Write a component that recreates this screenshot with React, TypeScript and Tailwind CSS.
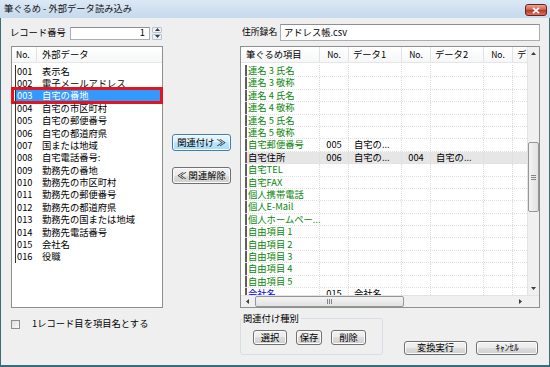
import React from 'react';

const leftItems: [string, string][] = [
  ['001', '表示名'],
  ['002', '電子メールアドレス'],
  ['003', '自宅の番地'],
  ['004', '自宅の市区町村'],
  ['005', '自宅の郵便番号'],
  ['006', '自宅の都道府県'],
  ['007', '国または地域'],
  ['008', '自宅電話番号:'],
  ['009', '勤務先の番地'],
  ['010', '勤務先の市区町村'],
  ['011', '勤務先の郵便番号'],
  ['012', '勤務先の都道府県'],
  ['013', '勤務先の国または地域'],
  ['014', '勤務先電話番号'],
  ['015', '会社名'],
  ['016', '役職'],
];

type GridRow = {
  name: string;
  tone?: 'green' | 'black' | 'blue';
  n1?: string;
  d1?: string;
  n2?: string;
  d2?: string;
  selected?: boolean;
};

const gridRows: GridRow[] = [
  { name: '連名 3 氏名' },
  { name: '連名 3 敬称' },
  { name: '連名 4 氏名' },
  { name: '連名 4 敬称' },
  { name: '連名 5 氏名' },
  { name: '連名 5 敬称' },
  { name: '自宅郵便番号', n1: '005', d1: '自宅の...' },
  { name: '自宅住所', tone: 'black', n1: '006', d1: '自宅の...', n2: '004', d2: '自宅の...', selected: true },
  { name: '自宅TEL' },
  { name: '自宅FAX' },
  { name: '個人携帯電話' },
  { name: '個人E-Mail' },
  { name: '個人ホームペー...' },
  { name: '自由項目 1' },
  { name: '自由項目 2' },
  { name: '自由項目 3' },
  { name: '自由項目 4' },
  { name: '自由項目 5' },
  { name: '会社名', tone: 'blue', n1: '015', d1: '会社名' },
];

const toneClass = {
  green: 'text-[#0b860b]',
  black: 'text-black',
  blue: 'text-[#0000ee]',
};

function Tri({ dir }: { dir: 'up' | 'down' | 'left' | 'right' }) {
  if (dir === 'up' || dir === 'down') {
    return (
      <svg viewBox="0 0 5 3" className="w-[5px] h-[3px]">
        <polygon points={dir === 'up' ? '0,3 2.5,0 5,3' : '0,0 2.5,3 5,0'} fill="#3c3c3c" />
      </svg>
    );
  }
  return (
    <svg viewBox="0 0 3 5" className="w-[3px] h-[5px]">
      <polygon points={dir === 'left' ? '3,0 0,2.5 3,5' : '0,0 3,2.5 0,5'} fill="#3c3c3c" />
    </svg>
  );
}

function Btn({ children, hot, className }: { children: React.ReactNode; hot?: boolean; className: string }) {
  return (
    <button
      className={
        'flex items-center justify-center whitespace-nowrap rounded-[3px] border text-[9.3px] leading-none text-black shadow-[inset_0_0_0_1px_#fbfbfb] ' +
        (hot
          ? 'border-[#3c7fb1] bg-[linear-gradient(#eaf6fd,#d9f0fc_50%,#bee6fd_50%,#a7d9f5)] '
          : 'border-[#707070] bg-[linear-gradient(#f2f2f2,#ebebeb_50%,#dddddd_50%,#cfcfcf)] ') +
        className
      }
    >
      {children}
    </button>
  );
}

function VScroll() {
  return (
    <div className="flex w-[12px] flex-col bg-[#f0f0f0] border-l border-[#e4e4e4]">
      <div className="flex h-[13px] items-center justify-center">
        <Tri dir="up" />
      </div>
      <div className="h-[82px]" />
      <div className="flex h-[70px] items-center justify-center rounded-[2px] border border-[#969696] bg-[linear-gradient(90deg,#f3f3f3,#e2e2e2)]">
        <svg viewBox="0 0 5 5" className="w-[5px] h-[5px]">
          <path d="M0 0.5H5M0 2.5H5M0 4.5H5" stroke="#6b6b6b" strokeWidth="0.8" />
        </svg>
      </div>
      <div className="flex-1" />
      <div className="flex h-[13px] items-center justify-center">
        <Tri dir="down" />
      </div>
    </div>
  );
}

function HScroll() {
  return (
    <div className="flex h-[12px] border-t border-[#e4e4e4] bg-[#f0f0f0]">
      <div className="flex w-[286px]">
        <div className="flex w-[13px] items-center justify-center">
          <Tri dir="left" />
        </div>
        <div className="w-[1px]" />
        <div className="flex w-[149px] items-center justify-center rounded-[2px] border border-[#969696] bg-[linear-gradient(#f3f3f3,#e2e2e2)]">
          <svg viewBox="0 0 5 5" className="w-[5px] h-[5px]">
            <path d="M0.5 0V5M2.5 0V5M4.5 0V5" stroke="#6b6b6b" strokeWidth="0.8" />
          </svg>
        </div>
        <div className="flex-1" />
        <div className="flex w-[13px] items-center justify-center">
          <Tri dir="right" />
        </div>
      </div>
      <div className="flex-1 bg-[#f0f0f0]" />
    </div>
  );
}

export default function App() {
  return (
    <div className="flex h-[367px] w-[550px] flex-col overflow-hidden bg-[#cddff1] font-['Noto_Sans_CJK_JP',sans-serif] text-[9.3px] text-black">
      {/* title bar */}
      <div className="flex h-[18px] items-center justify-between bg-[linear-gradient(#dce8f5,#c6d9ed)] pl-[4px] pr-[3px]">
        <span className="text-[9.3px] leading-none text-[#111]">筆ぐるめ - 外部データ読み込み</span>
        <div className="mt-[2px] flex h-[12px] w-[22px] items-center justify-center rounded-[3px] border border-[#6d2219] bg-[linear-gradient(#e9a898,#d2604b_45%,#bd3a2a_55%,#d6735e)]">
          <svg viewBox="0 0 8 7" className="w-[8px] h-[7px]">
            <path d="M1 0.8L7 6.2M7 0.8L1 6.2" stroke="#fff" strokeWidth="1.8" />
          </svg>
        </div>
      </div>

      {/* body */}
      <div className="flex flex-1 border-x border-b-2 border-[#3a6c7a] bg-[#efefef]">
        {/* left column */}
        <div className="ml-[9px] flex w-[153px] flex-col pt-[8px]">
          <div className="flex h-[14px] items-center">
            <span className="w-[60px] leading-none">レコード番号</span>
            <div className="flex h-[13px] w-[80px] items-center justify-end border border-[#abadb3] border-t-[#8e8f8f] bg-white pr-[4px] leading-none">
              1
            </div>
            <div className="ml-[2px] flex h-[13px] w-[10px] flex-col gap-[1px]">
              <div className="flex flex-1 items-center justify-center rounded-[1px] border border-[#b5c4d4] bg-[#eef3f8]">
                <Tri dir="up" />
              </div>
              <div className="flex flex-1 items-center justify-center rounded-[1px] border border-[#b5c4d4] bg-[#eef3f8]">
                <Tri dir="down" />
              </div>
            </div>
          </div>

          <div className="ml-[1px] mt-[6px] flex h-[262px] w-[152px] flex-col border border-[#8e8f8f] bg-white">
            <div className="flex h-[16px] items-center border-b border-[#e5e5e5] bg-[linear-gradient(#ffffff,#f6f7f8)]">
              <span className="flex h-full w-[25px] items-center border-r border-[#e2e2e2] pl-[4px] text-[8.5px] leading-none">No.</span>
              <span className="pl-[5px] leading-none">外部データ</span>
            </div>
            <div className="mt-[2px] flex flex-col">
              {leftItems.map(([no, name]) => {
                const sel = no === '003';
                return (
                  <div
                    key={no}
                    className={
                      'relative ml-[3px] flex h-[12.4px] items-center border-l border-[#333] leading-none ' +
                      (sel ? 'bg-[#3399ff] text-white' : '')
                    }
                  >
                    <span className="w-[26px] pl-[1px]">{no}</span>
                    <span className="whitespace-nowrap">{name}</span>
                    {sel && (
                      <span className="absolute -left-[5px] -right-[1px] -top-[3px] -bottom-[2px] border-[3px] border-[#e5131b]" />
                    )}
                  </div>
                );
              })}
            </div>
          </div>

          <div className="mt-[11px] flex h-[10px] items-center">
            <div className="ml-[1px] h-[9px] w-[9px] border border-[#8f8f8f] bg-[linear-gradient(135deg,#dcdcdc,#fbfbfb)]" />
            <span className="ml-[12px] leading-none">1レコード目を項目名とする</span>
          </div>
        </div>

        {/* middle buttons */}
        <div className="ml-[9px] flex w-[59px] flex-col pt-[116px]">
          <Btn hot className="h-[17px] w-[59px]">
            関連付け ≫
          </Btn>
          <Btn className="mt-[16px] h-[17px] w-[59px]">≪ 関連解除</Btn>
        </div>

        {/* right column */}
        <div className="ml-[7px] flex w-[303px] flex-col pt-[6px]">
          <div className="flex h-[17px] items-center">
            <span className="w-[42px] shrink-0 whitespace-nowrap pl-[4px] text-[8.8px] leading-none">住所録名</span>
            <div className="flex h-[17px] w-[260px] items-center border border-[#abadb3] border-t-[#8e8f8f] bg-white pl-[3px] leading-none">
              アドレス帳.csv
            </div>
          </div>

          <div className="ml-[2px] mt-[5px] flex h-[262px] w-[300px] flex-col border border-[#8e8f8f] bg-white">
            <div className="flex flex-1 overflow-hidden">
              <div className="flex w-[286px] flex-col overflow-hidden">
                <div className="flex h-[16px] shrink-0 items-center border-b border-[#e5e5e5] bg-[linear-gradient(#ffffff,#f6f7f8)] leading-none">
                  <span className="flex h-full w-[79px] items-center border-r border-[#e2e2e2] pl-[5px]">筆ぐるめ項目</span>
                  <span className="flex h-full w-[29px] items-center justify-center border-r border-[#e2e2e2] text-[8.5px]">No.</span>
                  <span className="flex h-full w-[53px] items-center border-r border-[#e2e2e2] pl-[4px]">データ1</span>
                  <span className="flex h-full w-[29px] items-center justify-center border-r border-[#e2e2e2] text-[8.5px]">No.</span>
                  <span className="flex h-full w-[53px] items-center border-r border-[#e2e2e2] pl-[4px]">データ2</span>
                  <span className="flex h-full w-[29px] items-center justify-center border-r border-[#e2e2e2] text-[8.5px]">No.</span>
                  <span className="flex h-full flex-1 items-center overflow-hidden pl-[4px] whitespace-nowrap">デ</span>
                </div>
                <div className="mt-[2px] flex shrink-0 flex-col">
                  {gridRows.map((r) => (
                    <div
                      key={r.name}
                      className={
                        'ml-[4px] flex h-[12.4px] shrink-0 items-stretch border-b border-dotted border-[#e0e0e0] leading-none ' +
                        (r.selected ? 'bg-[#e6e6e6]' : '')
                      }
                    >
                      <span className="w-[2px] shrink-0 bg-[#5f5f5f]" />
                      <span
                        className={
                          'flex w-[73px] items-center whitespace-nowrap border-r border-dotted border-[#dcdcdc] pl-[1px] ' +
                          toneClass[r.tone ?? 'green']
                        }
                      >
                        {r.name}
                      </span>
                      <span className="flex w-[29px] items-center justify-center border-r border-dotted border-[#dcdcdc]">{r.n1}</span>
                      <span className="flex w-[53px] items-center border-r border-dotted border-[#dcdcdc] pl-[5px] whitespace-nowrap">{r.d1}</span>
                      <span className="flex w-[29px] items-center justify-center border-r border-dotted border-[#dcdcdc]">{r.n2}</span>
                      <span className="flex w-[53px] items-center border-r border-dotted border-[#dcdcdc] pl-[5px] whitespace-nowrap">{r.d2}</span>
                      <span className="flex w-[29px] items-center border-r border-dotted border-[#dcdcdc]" />
                      <span className="flex-1" />
                    </div>
                  ))}
                </div>
              </div>
              <VScroll />
            </div>
            <HScroll />
          </div>

          <div className="mt-[5px] flex items-start">
            <fieldset className="ml-[2px] flex h-[42px] w-[143px] gap-[9px] rounded-[3px] border border-[#d5dfe5] px-[12px] pt-[7px]">
              <legend className="-ml-[11px] pl-[1px] pr-[2px] text-[9.3px] leading-[10px]">関連付け種別</legend>
              <Btn className="h-[15px] w-[34px]">選択</Btn>
              <Btn className="h-[15px] w-[26px]">保存</Btn>
              <Btn className="h-[15px] w-[35px]">削除</Btn>
            </fieldset>
            <div className="ml-auto mr-[3px] mt-[28px] flex gap-[9px]">
              <Btn className="h-[14px] w-[63px]">変換実行</Btn>
              <Btn className="h-[14px] w-[62px]">ｷｬﾝｾﾙ</Btn>
            </div>
          </div>
        </div>
      </div>
    </div>
  );
}
